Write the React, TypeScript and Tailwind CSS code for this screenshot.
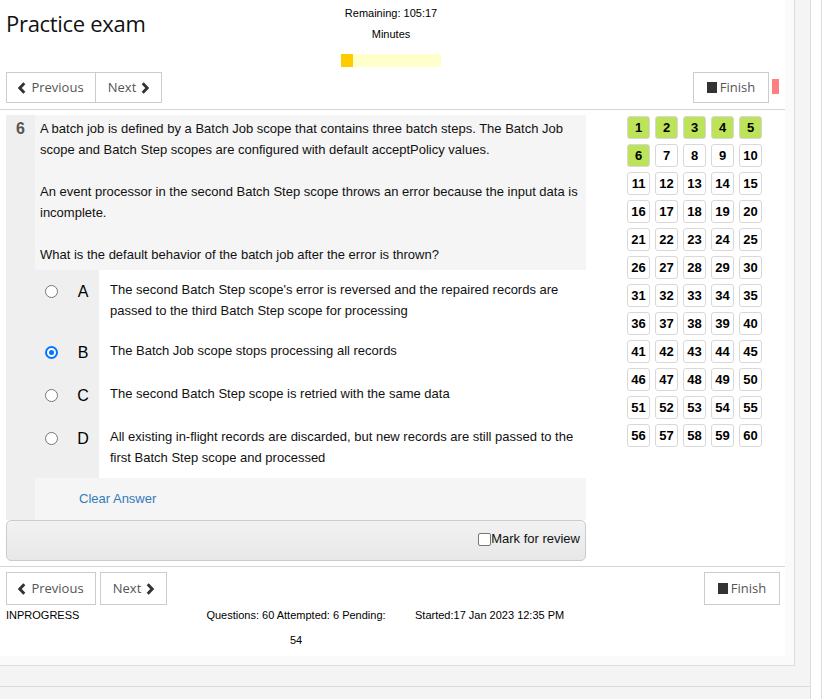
import React from 'react';

const options = [
  {
    key: 'A',
    text: "The second Batch Step scope's error is reversed and the repaired records are passed to the third Batch Step scope for processing",
  },
  { key: 'B', text: 'The Batch Job scope stops processing all records', checked: true },
  { key: 'C', text: 'The second Batch Step scope is retried with the same data' },
  {
    key: 'D',
    text: 'All existing in-flight records are discarded, but new records are still passed to the first Batch Step scope and processed',
  },
];

const attempted = 6;

function ChevronLeft() {
  return (
    <svg width="8" height="12" viewBox="0 0 8 12" className="shrink-0">
      <path d="M6.3 1.2 L1.8 6 L6.3 10.8" fill="none" stroke="#333" strokeWidth="2.8" strokeLinejoin="miter" />
    </svg>
  );
}

function ChevronRight() {
  return (
    <svg width="8" height="12" viewBox="0 0 8 12" className="shrink-0">
      <path d="M1.7 1.2 L6.2 6 L1.7 10.8" fill="none" stroke="#333" strokeWidth="2.8" strokeLinejoin="miter" />
    </svg>
  );
}

function FinishButton({ className = '' }: { className?: string }) {
  return (
    <button className={`flex w-[76px] items-center justify-center gap-[3px] border border-[#ccc] bg-white font-['Open_Sans',sans-serif] text-[13px] text-[#555] ${className}`}>
      <span className="h-[11px] w-[10px] bg-[#333]" />
      Finish
    </button>
  );
}

function Radio({ checked }: { checked?: boolean }) {
  if (checked) {
    return (
      <span className="flex h-[13px] w-[13px] shrink-0 items-center justify-center rounded-full border-2 border-[#0075ff] bg-white">
        <span className="block h-[5px] w-[5px] rounded-full bg-[#0075ff]" />
      </span>
    );
  }
  return <span className="block h-[13px] w-[13px] shrink-0 rounded-full border border-[#767676] bg-white" />;
}

export default function App() {
  return (
    <div className="flex h-[699px] w-[830px] overflow-hidden bg-white font-['Liberation_Sans',Arial,sans-serif] text-black">
      <div className="flex w-[811px] shrink-0 flex-col border-r border-[#ddd] bg-[#f4f4f4]">
        <div className="h-[666px] w-[795px] border-b border-r border-[#ddd] bg-[#fafafa] pb-[9px] pr-[9px]">
          <div className="h-[656px] w-[785px] bg-white">
            {/* header */}
            <div className="flex h-[110px] flex-col border-b border-[#d5d5d5]">
              <div className="grid h-[72px] grid-cols-[341px_100px_1fr]">
                <div className="pl-[6px] pt-[7px] font-['Open_Sans',sans-serif] text-[22px] leading-[32px] tracking-[-0.3px] text-[#111]">
                  Practice exam
                </div>
                <div className="flex flex-col items-center pt-[3px] text-[11px] leading-[21px]">
                  <div className="whitespace-nowrap">Remaining: 105:17</div>
                  <div>Minutes</div>
                  <div className="mt-[9px] h-[13px] w-[100px] bg-[#ffffcc]">
                    <div className="h-full w-[12px] bg-[#ffcc00]" />
                  </div>
                </div>
                <div />
              </div>
              <div className="flex h-[31px] justify-between pl-[6px] pr-[6px]">
                <div className="flex font-['Open_Sans',sans-serif] text-[13px] text-[#555]">
                  <button className="flex w-[90px] items-center justify-center gap-[5px] border border-[#ccc] bg-white">
                    <ChevronLeft />
                    Previous
                  </button>
                  <button className="-ml-px flex w-[67px] items-center justify-center gap-[5px] border border-[#ccc] bg-white">
                    Next
                    <ChevronRight />
                  </button>
                </div>
                <div className="flex items-start">
                  <FinishButton className="h-[31px]" />
                  <span className="ml-[3px] mt-[7px] h-[15px] w-[7px] bg-[#ff8080]" />
                </div>
              </div>
            </div>

            {/* question + palette */}
            <div className="flex border-b border-[#d5d5d5] px-[6px] pb-[5px] pt-[5px]">
              <div className="flex w-[580px] flex-col">
                <div className="flex">
                  <div className="w-[29px] bg-[#efefef] pt-[4px] text-center text-[16px] font-bold leading-[20px] text-[#555]">
                    6
                  </div>
                  <div className="flex w-[551px] flex-col">
                    <div className="bg-[#f5f5f5] pb-[5px] pl-[5px] pr-[5px] pt-[3px] text-[13px] leading-[21px] text-[#111]">
                      A batch job is defined by a Batch Job scope that contains three batch steps. The Batch Job scope and
                      Batch Step scopes are configured with default acceptPolicy values.
                      <br />
                      <br />
                      An event processor in the second Batch Step scope throws an error because the input data is
                      incomplete.
                      <br />
                      <br />
                      What is the default behavior of the batch job after the error is thrown?
                    </div>
                    {options.map((o) => (
                      <div key={o.key} className="flex">
                        <div className="w-[64px] shrink-0 bg-[#efefef] py-[10px]">
                          <div className="flex h-[23px] items-center">
                            <span className="ml-[10px] block">
                              <Radio checked={o.checked} />
                            </span>
                            <span className="ml-[14px] block w-[22px] text-center text-[16px] leading-[23px]">{o.key}</span>
                          </div>
                        </div>
                        <div className="flex-1 bg-white py-[10px] pl-[11px] pr-[10px] text-[13px] leading-[20.5px] text-[#111]">
                          {o.text}
                        </div>
                      </div>
                    ))}
                    <div className="flex h-[42px] items-center bg-[#f5f5f5] pl-[44px] text-[13px] text-[#337ab7]">
                      Clear Answer
                    </div>
                  </div>
                </div>
                <div className="flex h-[41px] items-center justify-end rounded-[5px] border border-[#ccc] bg-gradient-to-b from-[#f2f2f2] to-[#e8e8e8] pb-[3px] pr-[5px] text-[13px] text-[#111]">
                  <span className="h-[13px] w-[13px] rounded-[2px] border border-[#767676] bg-white" />
                  Mark for review
                </div>
              </div>
              <div className="ml-[41px] mt-[1px] grid h-fit grid-cols-[repeat(5,23px)] gap-[5px]">
                {Array.from({ length: 60 }, (_, i) => i + 1).map((n) => (
                  <div
                    key={n}
                    className={`flex h-[23px] w-[23px] items-center justify-center rounded-[3px] border border-[#d8d8d8] text-[13px] font-bold ${
                      n <= attempted ? 'bg-[#bde35b]' : 'bg-white'
                    }`}
                  >
                    {n}
                  </div>
                ))}
              </div>
            </div>

            {/* footer */}
            <div className="flex justify-between pl-[6px] pr-[5px] pt-[5px]">
              <div className="flex h-[33px] font-['Open_Sans',sans-serif] text-[13px] text-[#555]">
                <button className="flex w-[90px] items-center justify-center gap-[5px] border border-[#ccc] bg-white">
                  <ChevronLeft />
                  Previous
                </button>
                <button className="ml-[4px] flex w-[67px] items-center justify-center gap-[5px] border border-[#ccc] bg-white">
                  Next
                  <ChevronRight />
                </button>
              </div>
              <FinishButton className="h-[33px]" />
            </div>
            <div className="mt-[3px] flex pl-[6px] text-[11px] leading-[14px]">
              <div className="w-[195px]">INPROGRESS</div>
              <div className="w-[190px] text-center">
                <div>Questions: 60 Attempted: 6 Pending:</div>
                <div className="mt-[11px]">54</div>
              </div>
              <div className="pl-[24px]">Started:17 Jan 2023 12:35 PM</div>
            </div>
          </div>
        </div>
        <div className="h-[21px] border-b border-[#ddd]" />
      </div>
      <div className="w-[11px] shrink-0 border-r border-[#ddd]" />
    </div>
  );
}
